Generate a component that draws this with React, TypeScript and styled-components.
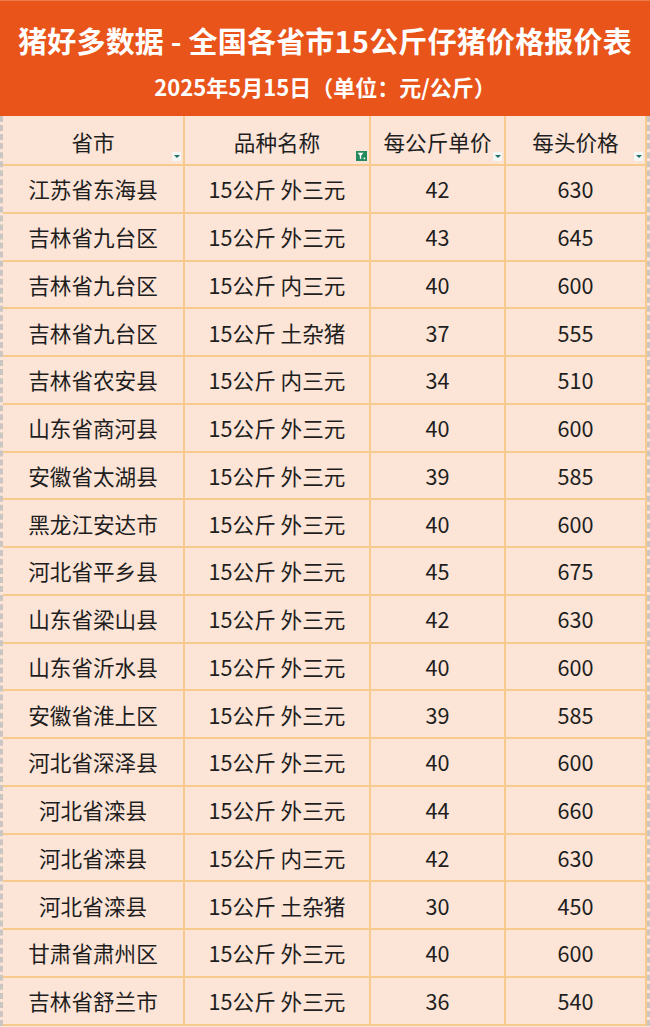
import React from "react";
import styled, { createGlobalStyle } from "styled-components";

const GlobalStyle = createGlobalStyle`
  html, body {
    margin: 0;
    padding: 0;
    background: #fbe8d8;
  }
  body {
    font-family: "Noto Sans CJK SC", "Noto Sans", sans-serif;
  }
  * { box-sizing: border-box; }
`;

const Page = styled.div`
  width: 650px;
  display: flex;
  flex-direction: column;
`;

const Banner = styled.header`
  height: 116px;
  background: #e8541a;
  border-top: 1px solid #ee7a4a;
  display: flex;
  flex-direction: column;
  align-items: center;
  color: #ffffff;
  font-weight: 700;
  padding-top: 15px;
`;

const Title = styled.h1`
  margin: 0;
  font-size: 29px;
  line-height: 48px;
  height: 48px;
  font-weight: 700;
  letter-spacing: 0.2px;
  white-space: nowrap;
`;

const Subtitle = styled.div`
  font-size: 22px;
  line-height: 44px;
  font-weight: 700;
  white-space: nowrap;
`;

const Table = styled.div`
  display: grid;
  grid-template-columns: 182px 186px 135px 141px;
  border-left: 3px dashed #cbc6c2;
  border-right: 3px dashed #cbc6c2;
  background: #fce4d6;
`;

const Cell = styled.div<{ $head?: boolean }>`
  position: relative;
  height: ${(p) => (p.$head ? "50px" : "47.75px")};
  padding-top: ${(p) => (p.$head ? "2px" : "0")};
  border-right: 2px solid #f6cb8d;
  border-bottom: 2px solid #f6cb8d;
  display: flex;
  align-items: center;
  justify-content: center;
  font-size: 21.6px;
  color: #1e1e1e;
  white-space: nowrap;
`;

const Arrow = styled.span`
  position: absolute;
  right: 2px;
  bottom: 3px;
  width: 9px;
  height: 9px;
  background: #f3f6f2;
  display: flex;
  align-items: center;
  justify-content: center;
  &::after {
    content: "";
    width: 0;
    height: 0;
    border-left: 3px solid transparent;
    border-right: 3px solid transparent;
    border-top: 3px solid #1e6d66;
  }
`;

const FilterBadge = styled.span`
  position: absolute;
  right: 2px;
  bottom: 3px;
  width: 11px;
  height: 10px;
  background: #238a5c;
  display: flex;
  align-items: center;
  justify-content: center;
`;

const FilterIcon = () => (
  <svg width="9" height="8" viewBox="0 0 9 8">
    <path d="M0.5 0.8 H6.5 L4.2 3.6 V7.2 L2.8 6.4 V3.6 Z" fill="#ffffff" />
    <rect x="6.6" y="5.6" width="1.6" height="1.6" fill="#ffffff" />
  </svg>
);

type Row = [string, string, number, number];

const rows: Row[] = [
  ["江苏省东海县", "15公斤 外三元", 42, 630],
  ["吉林省九台区", "15公斤 外三元", 43, 645],
  ["吉林省九台区", "15公斤 内三元", 40, 600],
  ["吉林省九台区", "15公斤 土杂猪", 37, 555],
  ["吉林省农安县", "15公斤 内三元", 34, 510],
  ["山东省商河县", "15公斤 外三元", 40, 600],
  ["安徽省太湖县", "15公斤 外三元", 39, 585],
  ["黑龙江安达市", "15公斤 外三元", 40, 600],
  ["河北省平乡县", "15公斤 外三元", 45, 675],
  ["山东省梁山县", "15公斤 外三元", 42, 630],
  ["山东省沂水县", "15公斤 外三元", 40, 600],
  ["安徽省淮上区", "15公斤 外三元", 39, 585],
  ["河北省深泽县", "15公斤 外三元", 40, 600],
  ["河北省滦县", "15公斤 外三元", 44, 660],
  ["河北省滦县", "15公斤 内三元", 42, 630],
  ["河北省滦县", "15公斤 土杂猪", 30, 450],
  ["甘肃省肃州区", "15公斤 外三元", 40, 600],
  ["吉林省舒兰市", "15公斤 外三元", 36, 540],
];

export default function App() {
  return (
    <Page>
      <GlobalStyle />
      <Banner>
        <Title>猪好多数据 - 全国各省市15公斤仔猪价格报价表</Title>
        <Subtitle>2025年5月15日（单位：元/公斤）</Subtitle>
      </Banner>
      <Table>
        <Cell $head>
          省市
          <Arrow />
        </Cell>
        <Cell $head>
          品种名称
          <FilterBadge>
            <FilterIcon />
          </FilterBadge>
        </Cell>
        <Cell $head>
          每公斤单价
          <Arrow />
        </Cell>
        <Cell $head>
          每头价格
          <Arrow />
        </Cell>
        {rows.map((r, i) => (
          <React.Fragment key={i}>
            <Cell>{r[0]}</Cell>
            <Cell>{r[1]}</Cell>
            <Cell>{r[2]}</Cell>
            <Cell>{r[3]}</Cell>
          </React.Fragment>
        ))}
      </Table>
    </Page>
  );
}
